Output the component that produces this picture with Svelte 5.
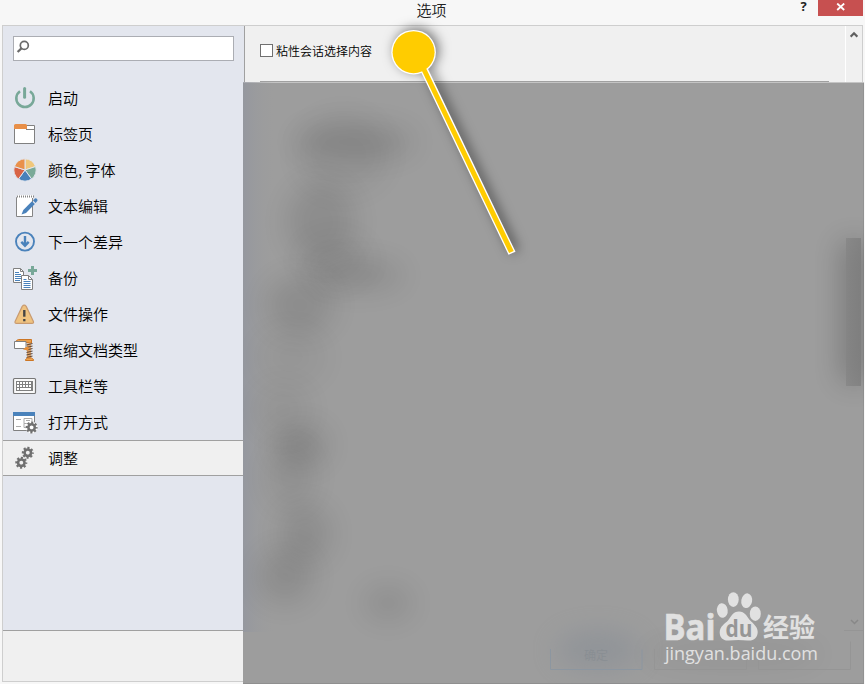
<script lang="ts">
	const items = [
		{ icon: 'power', label: '启动' },
		{ icon: 'tabs', label: '标签页' },
		{ icon: 'palette', label: '颜色, 字体' },
		{ icon: 'edit', label: '文本编辑' },
		{ icon: 'next', label: '下一个差异' },
		{ icon: 'backup', label: '备份' },
		{ icon: 'warning', label: '文件操作' },
		{ icon: 'archive', label: '压缩文档类型' },
		{ icon: 'keyboard', label: '工具栏等' },
		{ icon: 'openwith', label: '打开方式' },
		{ icon: 'gears', label: '调整' }
	];

	let selected = $state(10);
	let query = $state('');
	let sticky = $state(false);

	// Dark smudges behind the frosted panel: cx, cy, rx, ry, opacity
	const smudges = [
		[112, 60, 60, 17, 0.11],
		[100, 72, 46, 40, 0.05],
		[78, 140, 34, 40, 0.1],
		[115, 193, 46, 15, 0.1],
		[92, 178, 36, 26, 0.05],
		[57, 223, 34, 30, 0.1],
		[48, 275, 36, 30, 0.04],
		[40, 328, 28, 28, 0.05],
		[58, 363, 26, 21, 0.12],
		[48, 394, 24, 34, 0.07],
		[62, 452, 26, 30, 0.1],
		[42, 494, 28, 28, 0.1],
		[145, 521, 24, 17, 0.09]
	];
</script>

{#snippet gear(cx: number, cy: number)}
	<g transform="translate({cx} {cy})" fill="none" stroke="#707070">
		<circle r="3.2" stroke-width="2.6" />
		<circle r="4.8" stroke-width="2.4" stroke-dasharray="2.07 1.7" stroke-dashoffset="1.03" />
	</g>
{/snippet}

{#snippet itemIcon(name: string)}
	<svg class="icon" viewBox="0 0 26 26" aria-hidden="true">
		{#if name === 'power'}
			<path d="M8 6.2a8.7 8.7 0 1 0 10 0" fill="none" stroke="#78a898" stroke-width="2.6" />
			<path d="M12.6 3.6v8.600" stroke="#78a898" stroke-width="3" stroke-linecap="round" />
		{:else if name === 'tabs'}
			<path d="M2.5 4.5h20v18h-20z" fill="#fff" stroke="#808080" />
			<path d="M14 8.5h8.5" stroke="#808080" />
			<path d="M2 8V4.5Q2 3 3.5 3h10Q15 3 15 4.5V8z" fill="#e88f48" />
		{:else if name === 'palette'}
			<g stroke="#e3e6ee" stroke-width="1">
				<path d="M13 13V1.8A11.2 11.2 0 0 1 23.65 9.54z" fill="#f0c77b" />
				<path d="M13 13L23.65 9.54A11.2 11.2 0 0 1 19.58 22.06z" fill="#7aaa98" />
				<path d="M13 13L19.58 22.06A11.2 11.2 0 0 1 6.42 22.06z" fill="#4881ba" />
				<path d="M13 13L6.42 22.06A11.2 11.2 0 0 1 2.35 9.54z" fill="#d86345" />
				<path d="M13 13L2.35 9.54A11.2 11.2 0 0 1 13 1.8z" fill="#e9914b" />
			</g>
		{:else if name === 'edit'}
			<path d="M4.5 4.5h16v19h-16z" fill="#fff" stroke="#858585" />
			<path d="M5 3.5h16" stroke="#fff" stroke-width="3" />
			<path d="M5 3.5h17" stroke="#858585" stroke-width="2" stroke-dasharray="1 1" />
			<path d="M9.5 21.5L11.3 17 20 8.3l2.8 2.8-8.8 8.8z" fill="#4a82bb" />
			<path d="M21 7.4l1.8-1.8q1.2-.8 2.2.3t.3 2.2l-1.7 1.8z" fill="#4a82bb" />
		{:else if name === 'next'}
			<circle cx="13" cy="12.6" r="9" fill="none" stroke="#4a82bb" stroke-width="1.9" />
			<path d="M13 7v10M9.3 12.8L13 16.7l3.7-3.9" fill="none" stroke="#4a82bb" stroke-width="2.4" />
		{:else if name === 'backup'}
			<path d="M1.5 3.5h7l3 3v11h-10z" fill="#fff" stroke="#808080" />
			<path d="M8.5 3.5v3h3" fill="none" stroke="#808080" />
			<path d="M3 7.5h4M3 9.5h6M3 11.5h6M3 13.5h6M3 15.5h5" stroke="#4a82bb" />
			<path d="M9.5 10.5h7l4 4v10h-11z" fill="#fff" stroke="#808080" />
			<path d="M16.5 10.5v4h4" fill="none" stroke="#808080" />
			<path d="M11.5 14.5h3M11.5 16.5h7M11.5 18.5h7M11.5 20.5h7M11.5 22.5h7" stroke="#4a82bb" />
			<path d="M20.5 1v9M16 5.5h9" stroke="#78a898" stroke-width="3" />
		{:else if name === 'warning'}
			<path d="M10.2 5.4q2-2.5 4 0l7.2 15q.6 2-1.4 2H4.5q-2-.1-1.4-2z" fill="#efc380" stroke="#c99b70" stroke-width="1.2" />
			<path d="M12.3 9v6.7" stroke="#444" stroke-width="2.4" />
			<path d="M12.3 18v2.3" stroke="#444" stroke-width="2.3" />
		{:else if name === 'archive'}
			<path d="M4.5 5V3.5L6.5 2.500h13V6h-3v-.5z" fill="#eba04d" stroke="#cc7625" />
			<path d="M15 6.5h4v15h-4z" fill="#dfa56c" />
			<path d="M14.5 8l6-1.5m-6 4l6-1.5m-6 4l6-1.5m-6 4l6-1.5m-6 4l6-1.5m-6 4l6-1.5" stroke="#634936" stroke-width="1.2" />
			<path d="M2.5 4.5h11.5v7h-11.5z" fill="#fff" stroke="#808080" />
			<path d="M11 12.5l3-2.5h2.5v3.5z" fill="#e88f38" />
			<path d="M13.5 23.5v-1l2-1.5h4l2 1.5v1z" fill="#efa550" stroke="#cc7625" />
		{:else if name === 'keyboard'}
			<rect x="1.500" y="5.500" width="22" height="15" rx="1" fill="#f9f9f9" stroke="#777" stroke-width="1.2" />
			<path d="M4 8h17v10H4z" fill="#808080" />
			<path d="M5 10h15M5 13h15M5 16h15" stroke="#fff" stroke-width="2" stroke-dasharray="2 1" />
			<path d="M8 16h9" stroke="#fff" stroke-width="2" />
		{:else if name === 'openwith'}
			<path d="M1.5 5.5h21v16h-21z" fill="#fff" stroke="#808080" />
			<path d="M1 3h22v4H1z" fill="#4a82bb" />
			<path d="M4 10.5h5M4 17.5h5M12 9.5h8v5h-8zM14 11.5h4M12 14.5v4h3" fill="none" stroke="#aaa" />
			<circle cx="19.6" cy="18.4" r="6" fill="#fff" />
			{@render gear(19.6, 18.4)}
		{:else if name === 'gears'}
			{@render gear(15.8, 7.7)}
			{@render gear(9.3, 17.7)}
		{/if}
	</svg>
{/snippet}

<div class="window">
	<header class="titlebar">
		<span class="title">选项</span>
		<div class="controls">
			<button class="help" aria-label="Help">?</button>
			<button class="close" aria-label="Close">
				<svg viewBox="0 0 10 8" aria-hidden="true"><path d="M1.2.5l7 6.5M8.2.5l-7 6.5" stroke="#fff" stroke-width="1.8" /></svg>
			</button>
		</div>
	</header>

	<div class="frame">
		<div class="body">
			<aside class="sidebar">
				<label class="search">
					<svg viewBox="0 0 14 14" aria-hidden="true">
						<circle cx="8.3" cy="5.4" r="4" fill="none" stroke="#6a6a6a" stroke-width="1.7" />
						<path d="M5.4 8.4L1.6 12" stroke="#6a6a6a" stroke-width="2.2" />
					</svg>
					<input bind:value={query} aria-label="Search" />
				</label>
				<nav>
					{#each items as item, i}
						<button class="item" class:selected={selected === i} onclick={() => (selected = i)}>
							{@render itemIcon(item.icon)}
							<span>{item.label}</span>
						</button>
					{/each}
				</nav>
			</aside>
			<main class="content">
				<label class="check">
					<input type="checkbox" bind:checked={sticky} />
					<span>粘性会话选择内容</span>
				</label>
				<hr />
			</main>
			<div class="scrollbar">
				<svg viewBox="0 0 8 7" aria-hidden="true"><path d="M.6 5.6L4 2.2l3.4 3.4" fill="none" stroke="#606060" stroke-width="2.2" /></svg>
			</div>
		</div>
		<footer></footer>
	</div>

	<div class="veil">
		<svg viewBox="0 0 621 602" aria-hidden="true">
			<defs>
				<filter id="soft" x="-100%" y="-100%" width="300%" height="300%">
					<feGaussianBlur stdDeviation="14" />
				</filter>
				<linearGradient id="edge">
					<stop offset="0" stop-color="#8e93a0" stop-opacity=".55" />
					<stop offset="1" stop-color="#9c9c9c" stop-opacity="0" />
				</linearGradient>
				<linearGradient id="thumb">
					<stop offset="0" stop-color="#848484" />
					<stop offset="1" stop-color="#7b7b7b" />
				</linearGradient>
			</defs>
			<rect width="32" height="550" fill="url(#edge)" />
			{#each smudges as [cx, cy, rx, ry, opacity]}
				<ellipse {cx} {cy} {rx} {ry} {opacity} filter="url(#soft)" />
			{/each}
			<rect x="598" y="160" width="26" height="140" opacity=".22" filter="url(#soft)" />
			<rect x="603" y="156" width="15" height="148" fill="url(#thumb)" opacity=".7" />
			<ellipse cx="355" cy="568" rx="42" ry="18" fill="#6e7c8c" opacity=".3" filter="url(#soft)" />
			<ellipse cx="490" cy="572" rx="90" ry="14" opacity=".05" filter="url(#soft)" />
			<path d="M307.5 567v20.5h91.500v-20" fill="none" stroke="#8c96a0" />
			<path d="M411.5 567v20.5h92v-20M515.5 567v20.5h92v-28M601 548.5h19" fill="none" stroke="#959595" />
			<path d="M608 538l3.5 3.5 3.5-3.5" fill="none" stroke="#888" stroke-width="1.5" />
			<text x="341" y="578" class="ghost">确定</text>
		</svg>
	</div>

	<svg class="callout" viewBox="0 0 150 250" aria-hidden="true">
		<g fill="#fff">
			<path d="M33 45.300l95.500 199.500 7-3.100L39.900 42z" />
			<circle cx="33.600" cy="42.200" r="22.300" />
		</g>
		<g fill="#fc0">
			<path d="M34.800 46l94.300 196.900 4.600-2L39.200 44z" />
			<circle cx="33.600" cy="42.200" r="21" />
		</g>
	</svg>

	<svg class="watermark" viewBox="0 0 170 80">
		<g fill="#e1e1e1">
			<text x="2.5" y="49.5" class="bai" textLength="52" lengthAdjust="spacingAndGlyphs">Bai</text>
			<ellipse cx="61.3" cy="20.5" rx="5.4" ry="7.3" transform="rotate(-8 61.3 20.5)" />
			<ellipse cx="72.3" cy="9.600" rx="5.4" ry="7.4" />
			<ellipse cx="85.700" cy="10.700" rx="5.4" ry="7.4" transform="rotate(10 85.7 10.7)" />
			<ellipse cx="94.300" cy="23.700" rx="5.5" ry="7.2" />
			<path d="M78 21.500c-6 0-8 5-11 9-3 3-8.300 6-8.300 12 0 5.500 4 8.500 9 8 6-.8 13-.8 19 0 6 .6 10-3 10-8.500 0-5-4-8-8-12-3-4-5-8.500-10.700-8.500z" />
			<text x="102" y="47" class="cn" textLength="52">经验</text>
			<text x="4" y="70" class="url" textLength="153" lengthAdjust="spacingAndGlyphs">jingyan.baidu.com</text>
		</g>
		<text x="64.500" y="46.500" class="du" textLength="27" lengthAdjust="spacingAndGlyphs">du</text>
	</svg>
</div>

<style>
	:global(body) {
		margin: 0;
		background: #f7f7f7;
	}
	.window {
		position: relative;
		width: 865px;
		height: 684px;
		box-sizing: border-box;
		padding: 0 2px 2px;
		overflow: hidden;
		display: flex;
		flex-direction: column;
		background: #f7f7f7;
		color: #000;
		font-family: "Noto Sans CJK SC", sans-serif;
		font-weight: 350;
	}
	button {
		border: 0;
		padding: 0;
		background: none;
		font-family: inherit;
		color: inherit;
	}
	.titlebar {
		flex: none;
		height: 25px;
		display: grid;
		grid-template-columns: 1fr auto 1fr;
	}
	.title {
		grid-column: 2;
		padding-right: 2px;
		font-size: 15px;
		line-height: 19px;
		color: #222;
	}
	.controls {
		display: flex;
		justify-content: flex-end;
		align-items: flex-start;
	}
	.help {
		width: 29px;
		height: 13px;
		font: bold 13px/13px "Open Sans", sans-serif;
		color: #222;
	}
	.close {
		width: 45px;
		height: 16px;
		background: #c75050;
		display: flex;
		justify-content: center;
		padding-top: 3px;
	}
	.close svg {
		width: 10px;
		height: 8px;
	}
	.frame {
		flex: 1;
		border: 1px solid #cecece;
		display: flex;
		flex-direction: column;
		background: #f0f0f0;
	}
	.body {
		height: 604px;
		display: flex;
		border-bottom: 1px solid #a0a0a0;
	}
	.sidebar {
		width: 241px;
		border-right: 1px solid #a0a0a0;
		background: #e3e6ee;
	}
	.search {
		display: flex;
		box-sizing: border-box;
		width: 221px;
		height: 25px;
		margin: 10px 0 19px 10px;
		border: 1px solid #abadb3;
		background: #fff;
	}
	.search svg {
		width: 14px;
		height: 14px;
		margin: 3px 0 0 2px;
	}
	.search input {
		flex: 1;
		min-width: 0;
		border: 0;
		outline: 0;
		background: none;
	}
	.item {
		box-sizing: border-box;
		width: 100%;
		height: 36px;
		padding-left: 9px;
		border: solid transparent;
		border-width: 1px 0;
		display: flex;
		align-items: center;
		gap: 10px;
		font-size: 15px;
		font-weight: 350;
		line-height: 20px;
		text-align: left;
	}
	.item.selected {
		background: #f0f0f0;
		border-color: #a0a0a0;
	}
	.icon {
		flex: none;
		width: 26px;
		height: 26px;
	}
	.content {
		flex: 1;
		padding: 18px 16px 0 15px;
	}
	.check {
		display: flex;
		align-items: center;
		gap: 3px;
		height: 13px;
		font-size: 12px;
	}
	.check input {
		appearance: none;
		width: 13px;
		height: 13px;
		margin: 0;
		border: 1px solid #707070;
		background: #fff;
	}
	.content hr {
		margin: 24px 0 0;
		border: 0;
		border-top: 1px solid #a0a0a0;
	}
	.scrollbar {
		width: 16px;
		border-left: 1px solid #fff;
		text-align: center;
		line-height: 0;
	}
	.scrollbar svg {
		width: 8px;
		height: 7px;
		margin-top: 5px;
	}

	/* Frosted sheet over the options that do not matter here. */
	.veil {
		position: absolute;
		left: 243px;
		top: 82px;
		width: 621px;
		height: 602px;
		box-sizing: border-box;
		background: #9d9d9d;
		box-shadow: inset 0 1px #c4c4c4, inset 0 -1px #8f8f8f, inset -1px 0 #929292;
	}
	.veil svg {
		display: block;
		width: 621px;
		height: 602px;
		overflow: hidden;
	}
	.ghost {
		font-size: 12px;
		fill: #898e93;
	}
	.callout {
		position: absolute;
		left: 380px;
		top: 10px;
		width: 150px;
		height: 250px;
		overflow: visible;
		filter: drop-shadow(3px -2px 6px rgba(0, 0, 0, 0.5));
	}
	.watermark {
		position: absolute;
		left: 661px;
		top: 590px;
		width: 170px;
		height: 80px;
		overflow: visible;
	}
	.bai {
		font: bold 35px "Open Sans", sans-serif;
		stroke: #e1e1e1;
		stroke-width: 0.6px;
	}
	.du {
		font: bold 23px "Open Sans", sans-serif;
		fill: #969696;
	}
	.cn {
		font-size: 26px;
		font-weight: 700;
	}
	.url {
		font: 500 19px "Open Sans", sans-serif;
	}
</style>
